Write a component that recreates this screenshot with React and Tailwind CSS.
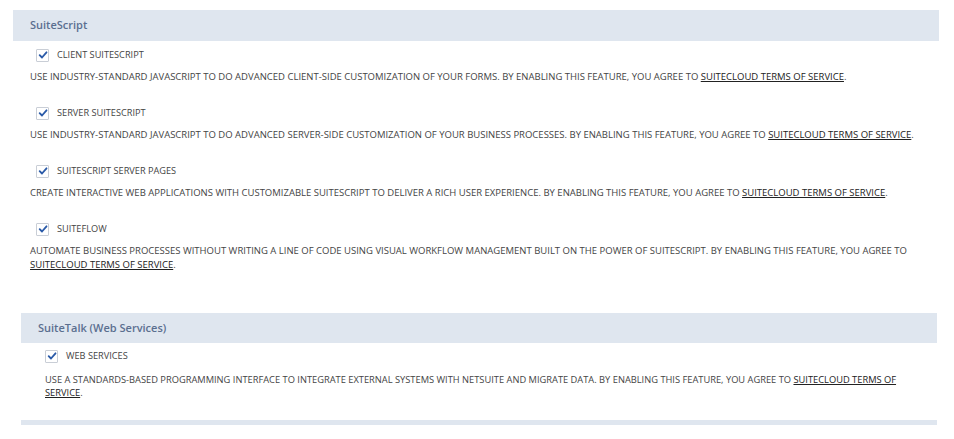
import React from 'react';

const font = { fontFamily: '"Open Sans", "Liberation Sans", sans-serif' };

const Check = () => (
    <span className="inline-flex items-center justify-center w-[13px] h-[13px] border border-[#c9ced6] bg-white rounded-[1px] shrink-0">
        <svg viewBox="0 0 12 12" className="w-[10px] h-[10px]">
            <path d="M2 6.2 L4.8 9 L10.2 2.8" fill="none" stroke="#2a5aa8" strokeWidth="2.2" strokeLinecap="round" strokeLinejoin="round" />
        </svg>
    </span>
);

const Terms = () => (
    <span className="underline underline-offset-1 text-[#222]">SUITECLOUD TERMS OF SERVICE</span>
);

const Feature = ({ label, text, boxIndent, textIndent, descClass = 'mt-[8px] leading-[14px] text-[9.5px]', last }) => (
    <div className={last ? '' : 'mb-[22px]'}>
        <div className={`flex items-center gap-[8px] h-[14px] ${boxIndent}`}>
            <Check />
            <span className="text-[9.2px] text-[#444]">{label}</span>
        </div>
        <p className={`text-[#444] ${descClass} ${textIndent}`}>
            {text} BY ENABLING THIS FEATURE, YOU AGREE TO <Terms />.
        </p>
    </div>
);

const Header = ({ title, h = 'h-[31px]' }) => (
    <div className={`${h} bg-[#dfe6ef] flex items-center px-[17px]`}>
        <span className="text-[11px] font-semibold text-[#5b6f8f]">{title}</span>
    </div>
);

const features = [
    { label: 'CLIENT SUITESCRIPT', text: 'USE INDUSTRY-STANDARD JAVASCRIPT TO DO ADVANCED CLIENT-SIDE CUSTOMIZATION OF YOUR FORMS.' },
    { label: 'SERVER SUITESCRIPT', text: 'USE INDUSTRY-STANDARD JAVASCRIPT TO DO ADVANCED SERVER-SIDE CUSTOMIZATION OF YOUR BUSINESS PROCESSES.' },
    { label: 'SUITESCRIPT SERVER PAGES', text: 'CREATE INTERACTIVE WEB APPLICATIONS WITH CUSTOMIZABLE SUITESCRIPT TO DELIVER A RICH USER EXPERIENCE.' },
    { label: 'SUITEFLOW', text: 'AUTOMATE BUSINESS PROCESSES WITHOUT WRITING A LINE OF CODE USING VISUAL WORKFLOW MANAGEMENT BUILT ON THE POWER OF SUITESCRIPT.' },
];

export default function App() {
    return (
        <div className="w-[954px] h-[439px] bg-white overflow-hidden pt-[10px]" style={font}>
            <section className="ml-[13px] w-[926px]">
                <Header title="SuiteScript" />
                <div className="pt-[7px] pr-[18px]">
                    {features.map((f, i) => (
                        <Feature key={f.label} {...f} last={i === features.length - 1} boxIndent="pl-[23px]" textIndent="pl-[17px]" />
                    ))}
                </div>
            </section>

            <section className="ml-[21px] w-[916px] mt-[41px]">
                <Header title="SuiteTalk (Web Services)" h="h-[30px]" />
                <div className="pt-[6px] pr-[22px]">
                    <Feature
                        label="WEB SERVICES"
                        text="USE A STANDARDS-BASED PROGRAMMING INTERFACE TO INTEGRATE EXTERNAL SYSTEMS WITH NETSUITE AND MIGRATE DATA."
                        boxIndent="pl-[24px]"
                        textIndent="pl-[24px]"
                        descClass="mt-[10px] leading-[13px] text-[9.3px]"
                        last
                    />
                </div>
            </section>

            <div className="ml-[21px] mt-[21px] w-[916px] h-[5px] bg-[#dfe6ef]" />
        </div>
    );
}
